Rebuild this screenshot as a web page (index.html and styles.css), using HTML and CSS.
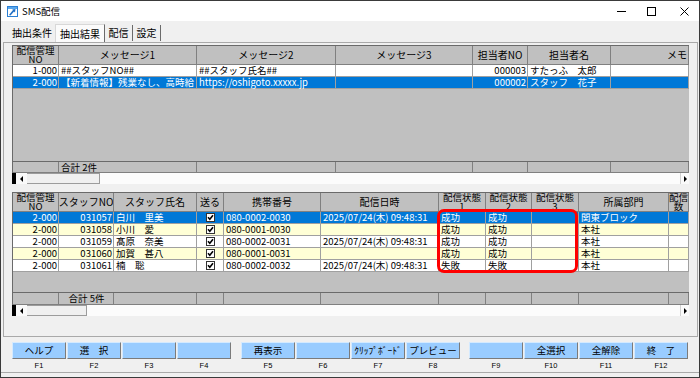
FILE: index.html
```html
<!DOCTYPE html>
<html lang="ja">
<head>
<meta charset="utf-8">
<title>SMS配信</title>
<link rel="stylesheet" href="styles.css">
</head>
<body>
<div class="window">
  <div class="titlebar">
    <svg class="app-icon" viewBox="0 0 11 11" width="11" height="11">
      <rect x="0.5" y="0.5" width="10" height="10" fill="#ffffff" stroke="#2a7fd4"/>
      <rect x="1" y="1" width="9" height="2" fill="#5aa7ec"/>
      <path d="M2 9 L6 4 L5 3.5 L8.5 3 L8 6.5 L7 5.5 L3.5 9.5 Z" fill="#1f6fc5"/>
    </svg>
    <span class="title">SMS配信</span>
    <div class="controls">
      <svg class="ctl ctl-min" viewBox="0 0 9 9" width="9" height="9"><line x1="0" y1="4.5" x2="9" y2="4.5" stroke="#000" stroke-width="1"/></svg>
      <svg class="ctl ctl-max" viewBox="0 0 9 9" width="9" height="9"><rect x="0.5" y="0.5" width="8" height="8" fill="none" stroke="#000" stroke-width="1"/></svg>
      <svg class="ctl ctl-close" viewBox="0 0 9 9" width="9" height="9"><path d="M0.5 0.5 L8.5 8.5 M8.5 0.5 L0.5 8.5" stroke="#000" stroke-width="1"/></svg>
    </div>
  </div>

  <div class="tabs">
    <div class="tab tab-first">抽出条件</div>
    <div class="tab tab-active">抽出結果</div>
    <div class="tab tab-sm">配信</div>
    <div class="tab tab-sm">設定</div>
  </div>

  <div class="panel">
    <div class="grid top-grid">
      <div class="row head">
        <div class="hc two">配信管理<br>NO</div>
        <div class="hc">メッセージ1</div>
        <div class="hc">メッセージ2</div>
        <div class="hc">メッセージ3</div>
        <div class="hc">担当者NO</div>
        <div class="hc">担当者名</div>
        <div class="hc end">メモ</div>
      </div>
      <div class="row data white">
        <div class="c r">1-000</div>
        <div class="c">##スタッフNO##</div>
        <div class="c">##スタッフ氏名##</div>
        <div class="c"></div>
        <div class="c r">000003</div>
        <div class="c">すたっふ　太郎</div>
        <div class="c"></div>
      </div>
      <div class="row data sel">
        <div class="c r">2-000</div>
        <div class="c">【新着情報】残業なし、高時給</div>
        <div class="c">https://oshigoto.xxxxx.jp</div>
        <div class="c"></div>
        <div class="c r">000002</div>
        <div class="c">スタッフ　花子</div>
        <div class="c"></div>
      </div>
      <div class="filler top-filler"></div>
      <div class="row sum">
        <div class="c"></div>
        <div class="c">合計 2件</div>
        <div class="c"></div>
        <div class="c"></div>
        <div class="c"></div>
        <div class="c"></div>
        <div class="c"></div>
      </div>
    </div>
    <div class="hscroll">
      <span class="sb-mark"></span>
      <span class="sb-btn"><svg width="4" height="6" viewBox="0 0 4 6"><polygon points="3,0 3,6 0,3" fill="#000"/></svg></span>
      <span class="sb-thumb thumb-wide"></span>
      <span class="sb-track"></span>
      <span class="sb-btn sb-right"><svg width="4" height="6" viewBox="0 0 4 6"><polygon points="1,0 1,6 4,3" fill="#000"/></svg></span>
    </div>

    <div class="bottom-wrap">
      <div class="grid bottom-grid">
        <div class="row head">
          <div class="hc two">配信管理<br>NO</div>
          <div class="hc">スタッフNO</div>
          <div class="hc">スタッフ氏名</div>
          <div class="hc">送る</div>
          <div class="hc">携帯番号</div>
          <div class="hc">配信日時</div>
          <div class="hc two">配信状態<br>1</div>
          <div class="hc two">配信状態<br>2</div>
          <div class="hc two">配信状態<br>3</div>
          <div class="hc">所属部門</div>
          <div class="hc two">配信<br>数</div>
        </div>
        <div class="row data sel">
          <div class="c r">2-000</div>
          <div class="c r">031057</div>
          <div class="c">白川　里美</div>
          <div class="c chk"><svg width="9" height="9" viewBox="0 0 9 9"><rect x="0.5" y="0.5" width="8" height="8" fill="#fff" stroke="#333"/><path d="M2 4.2 L3.8 6.2 L7 2.3" fill="none" stroke="#000" stroke-width="1.6"/></svg></div>
          <div class="c">080-0002-0030</div>
          <div class="c">2025/07/24(木) 09:48:31</div>
          <div class="c">成功</div>
          <div class="c">成功</div>
          <div class="c"></div>
          <div class="c">関東ブロック</div>
          <div class="c"></div>
        </div>
        <div class="row data yellow">
          <div class="c r">2-000</div>
          <div class="c r">031058</div>
          <div class="c">小川　愛</div>
          <div class="c chk"><svg width="9" height="9" viewBox="0 0 9 9"><rect x="0.5" y="0.5" width="8" height="8" fill="#fff" stroke="#333"/><path d="M2 4.2 L3.8 6.2 L7 2.3" fill="none" stroke="#000" stroke-width="1.6"/></svg></div>
          <div class="c">080-0001-0030</div>
          <div class="c"></div>
          <div class="c">成功</div>
          <div class="c">成功</div>
          <div class="c"></div>
          <div class="c">本社</div>
          <div class="c"></div>
        </div>
        <div class="row data white">
          <div class="c r">2-000</div>
          <div class="c r">031059</div>
          <div class="c">髙原　奈美</div>
          <div class="c chk"><svg width="9" height="9" viewBox="0 0 9 9"><rect x="0.5" y="0.5" width="8" height="8" fill="#fff" stroke="#333"/><path d="M2 4.2 L3.8 6.2 L7 2.3" fill="none" stroke="#000" stroke-width="1.6"/></svg></div>
          <div class="c">080-0002-0031</div>
          <div class="c">2025/07/24(木) 09:48:31</div>
          <div class="c">成功</div>
          <div class="c">成功</div>
          <div class="c"></div>
          <div class="c">本社</div>
          <div class="c"></div>
        </div>
        <div class="row data yellow">
          <div class="c r">2-000</div>
          <div class="c r">031060</div>
          <div class="c">加賀　甚八</div>
          <div class="c chk"><svg width="9" height="9" viewBox="0 0 9 9"><rect x="0.5" y="0.5" width="8" height="8" fill="#fff" stroke="#333"/><path d="M2 4.2 L3.8 6.2 L7 2.3" fill="none" stroke="#000" stroke-width="1.6"/></svg></div>
          <div class="c">080-0001-0031</div>
          <div class="c"></div>
          <div class="c">成功</div>
          <div class="c">成功</div>
          <div class="c"></div>
          <div class="c">本社</div>
          <div class="c"></div>
        </div>
        <div class="row data white">
          <div class="c r">2-000</div>
          <div class="c r">031061</div>
          <div class="c">楠　聡</div>
          <div class="c chk"><svg width="9" height="9" viewBox="0 0 9 9"><rect x="0.5" y="0.5" width="8" height="8" fill="#fff" stroke="#333"/><path d="M2 4.2 L3.8 6.2 L7 2.3" fill="none" stroke="#000" stroke-width="1.6"/></svg></div>
          <div class="c">080-0002-0032</div>
          <div class="c">2025/07/24(木) 09:48:31</div>
          <div class="c">失敗</div>
          <div class="c">失敗</div>
          <div class="c"></div>
          <div class="c">本社</div>
          <div class="c"></div>
        </div>
        <div class="filler bottom-filler"></div>
        <div class="row sum sum-b">
          <div class="c"></div>
          <div class="c ctr">合計 5件</div>
          <div class="c"></div>
          <div class="c"></div>
          <div class="c"></div>
          <div class="c"></div>
          <div class="c"></div>
          <div class="c"></div>
          <div class="c"></div>
          <div class="c"></div>
          <div class="c"></div>
        </div>
      </div>
      <div class="highlight"></div>
    </div>
    <div class="hscroll">
      <span class="sb-mark"></span>
      <span class="sb-btn"><svg width="4" height="6" viewBox="0 0 4 6"><polygon points="3,0 3,6 0,3" fill="#000"/></svg></span>
      <span class="sb-thumb thumb-narrow"></span>
      <span class="sb-track"></span>
      <span class="sb-btn sb-right"><svg width="4" height="6" viewBox="0 0 4 6"><polygon points="1,0 1,6 4,3" fill="#000"/></svg></span>
    </div>
  </div>

  <div class="fkeys">
    <div class="fgroup">
      <div class="fkey"><div class="fbtn">ヘルプ</div><div class="flabel">F1</div></div>
      <div class="fkey"><div class="fbtn">選　択</div><div class="flabel">F2</div></div>
      <div class="fkey"><div class="fbtn"></div><div class="flabel">F3</div></div>
      <div class="fkey"><div class="fbtn"></div><div class="flabel">F4</div></div>
    </div>
    <div class="fgroup g2">
      <div class="fkey"><div class="fbtn">再表示</div><div class="flabel">F5</div></div>
      <div class="fkey"><div class="fbtn"></div><div class="flabel">F6</div></div>
      <div class="fkey"><div class="fbtn">ｸﾘｯﾌﾟﾎﾞｰﾄﾞ</div><div class="flabel">F7</div></div>
      <div class="fkey"><div class="fbtn">プレビュー</div><div class="flabel">F8</div></div>
    </div>
    <div class="fgroup g3">
      <div class="fkey"><div class="fbtn"></div><div class="flabel">F9</div></div>
      <div class="fkey"><div class="fbtn">全選択</div><div class="flabel">F10</div></div>
      <div class="fkey"><div class="fbtn">全解除</div><div class="flabel">F11</div></div>
      <div class="fkey"><div class="fbtn">終　了</div><div class="flabel">F12</div></div>
    </div>
  </div>
</div>
</body>
</html>
```

FILE: styles.css
```css
* { box-sizing: border-box; }
html, body { margin: 0; padding: 0; }
body {
  width: 700px;
  height: 378px;
  overflow: hidden;
  background: #f0f0f0;
  font-family: "Noto Sans CJK JP", "Noto Sans", sans-serif;
  color: #000;
}

.window {
  width: 700px;
  height: 378px;
  border: 1px solid #3a3a3a;
  background: #f0f0f0;
  display: flex;
  flex-direction: column;
}

/* title bar */
.titlebar {
  height: 20px;
  flex-shrink: 0;
  background: #ffffff;
  display: flex;
  align-items: center;
  padding-left: 6px;
}
.app-icon { margin-right: 4px; }
.title { font-size: 9.5px; line-height: 12px; }
.controls {
  margin-left: auto;
  display: flex;
  align-items: center;
  padding-right: 10px;
}
.ctl-max { margin-left: 21px; }
.ctl-close { margin-left: 24px; }

/* tabs */
.tabs {
  height: 21px;
  flex-shrink: 0;
  display: flex;
  align-items: flex-end;
  padding-left: 8px;
  font-size: 10px;
}
.tab {
  height: 16px;
  line-height: 15px;
  text-align: center;
  border-right: 1px solid #6b6b6b;
  margin-bottom: 1px;
}
.tab-first { width: 46px; border-right: none; text-align: left; padding-left: 3px; }
.tab-active {
  width: 50px;
  height: 18px;
  margin-bottom: 0;
  line-height: 17px;
  background: #fbfbfb;
  border-top: 1px solid #d8d8d8;
  border-left: 1px solid #d8d8d8;
}
.tab-sm { width: 28px; }

/* tab panel */
.panel {
  height: 295px;
  flex-shrink: 0;
  margin: 0 1px 0 2px;
  border: 1px solid #a9a9a9;
  background: #f0f0f0;
  padding: 2px 7px 0 8px;
  display: flex;
  flex-direction: column;
}

/* grids */
.grid {
  width: 677px;
  border-left: 1px solid #6a6a6a;
  border-top: 1px solid #6a6a6a;
  font-size: 10px;
  background: #c0c0c0;
}
.row { display: grid; }
.top-grid .row { grid-template-columns: 46px 138px 139px 137px 55px 83px 78px; }
.bottom-grid .row { grid-template-columns: 46px 55px 83px 27px 97px 118px 47px 46px 47px 90px 20px; }

.head { height: 19px; background: #c0c0c0; }
.hc {
  border-right: 1px solid #808080;
  border-bottom: 1px solid #808080;
  display: flex;
  align-items: center;
  justify-content: center;
  text-align: center;
  line-height: 10px;
  white-space: nowrap;
  overflow-x: clip;
  overflow-y: visible;
}
.hc.two { font-size: 9.5px; line-height: 9px; }
.hc.end { justify-content: flex-end; padding-right: 1px; }

.data { height: 12px; }
.c {
  border-right: 1px solid #a0a0a0;
  border-bottom: 1px solid #a0a0a0;
  padding: 0 1px 0 2px;
  font-size: 9.5px;
  line-height: 11px;
  white-space: nowrap;
  overflow-x: clip;
  overflow-y: visible;
}
.c.r { text-align: right; padding: 0 1px 0 1px; }
.c.ctr { text-align: center; }
.c.chk { display: flex; align-items: center; justify-content: center; }
.c.chk svg { display: block; }

.white { background: #ffffff; }
.yellow { background: #ffffd6; }
.sel { background: #0078d7; color: #ffffff; }

.filler { background: #c0c0c0; border-bottom: 1px solid #6a6a6a; }
.top-filler { height: 73px; }
.bottom-filler { height: 21px; }

.sum { height: 11px; background: #c0c0c0; }
.sum-b { height: 12px; }
.sum .c { border-right-color: #808080; border-bottom-color: #808080; line-height: 10px; }

/* horizontal scrollbars */
.hscroll {
  width: 677px;
  height: 11px;
  flex-shrink: 0;
  display: flex;
  background: #fafafa;
}
.sb-mark { width: 4px; background: #000; }
.sb-btn {
  width: 11px;
  display: flex;
  align-items: center;
  justify-content: center;
  background: #fafafa;
}
.sb-right { width: 9px; border-left: 1px solid #d0d0d0; }
.sb-thumb {
  background: #f0f0f0;
  border: 1px solid #9c9c9c;
  border-left: none;
}
.thumb-wide { width: 73px; }
.thumb-narrow { width: 60px; }
.sb-track { flex: 1; background: #fcfcfc; }

.bottom-wrap { position: relative; margin-top: 8px; }
.highlight {
  position: absolute;
  left: 425px;
  top: 17px;
  width: 141px;
  height: 64px;
  border: 3px solid #ff0000;
  border-radius: 7px;
}

/* function keys */
.fkeys {
  height: 36px;
  flex-shrink: 0;
  display: flex;
  padding: 5px 0 0 11px;
  border-bottom: 1px solid #a9a9a9;
}
.fgroup { display: flex; }
.g2 { margin-left: 9px; }
.g3 { margin-left: 8px; }
.fkey { width: 55px; display: flex; flex-direction: column; }
.fbtn {
  width: 54px;
  height: 17px;
  background: #99ccff;
  border-top: 1px solid #d4eaff;
  border-left: 1px solid #d4eaff;
  border-right: 1px solid #7b7b7b;
  border-bottom: 1px solid #7b7b7b;
  font-size: 9.5px;
  line-height: 15px;
  text-align: center;
  white-space: nowrap;
  overflow: hidden;
}
.flabel {
  width: 54px;
  text-align: center;
  font-family: "Liberation Sans", "Noto Sans", sans-serif;
  font-size: 7.5px;
  line-height: 11px;
  padding-top: 1px;
}
```
